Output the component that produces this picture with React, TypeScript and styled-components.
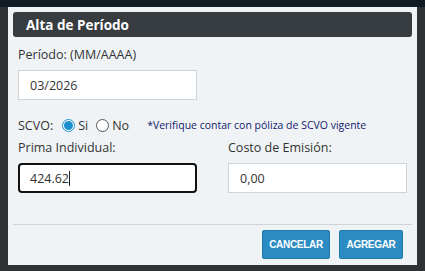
import React from "react";
import styled, { createGlobalStyle } from "styled-components";

const Global = createGlobalStyle`
  html, body { margin: 0; padding: 0; }
  body { background: #2e3133; font-family: "Open Sans", "Segoe UI", sans-serif; }
`;

const Page = styled.div`
  width: 425px;
  height: 271px;
  overflow: hidden;
  background: #2f3234;
  display: flex;
  flex-direction: column;
`;

const TopStrip = styled.div`
  height: 7px;
  background: #0f1c25;
  flex: none;
`;

const Stage = styled.div`
  flex: 1;
  display: flex;
  padding-left: 8px;
  align-items: flex-start;
`;

const Modal = styled.div`
  width: 409px;
  height: 258px;
  background: #eff3f6;
  display: flex;
  flex-direction: column;
  box-sizing: border-box;
  padding: 5px 5px 0;
`;

const Header = styled.div`
  height: 25px;
  background: #373c40;
  border-radius: 3px;
  color: #fff;
  font-weight: 700;
  font-size: 13.5px;
  display: flex;
  align-items: center;
  padding-left: 13px;
`;

const Body = styled.div`
  padding: 9px 5px 0;
  display: flex;
  flex-direction: column;
`;

const Label = styled.div`
  font-size: 12.5px;
  color: #333;
  height: 18px;
  line-height: 18px;
`;

const Input = styled.div<{ $focused?: boolean }>`
  width: 179px;
  height: 30px;
  box-sizing: border-box;
  background: #fff;
  border: ${(p) => (p.$focused ? "2px solid #111" : "1px solid #cfd3d6")};
  border-radius: ${(p) => (p.$focused ? "4px" : "0")};
  padding-left: ${(p) => (p.$focused ? "10px" : "11px")};
  font-size: 12.5px;
  color: #333;
  display: flex;
  align-items: center;
`;

const Caret = styled.span`
  display: inline-block;
  width: 1px;
  height: 15px;
  background: #222;
`;

const RadioRow = styled.div`
  display: flex;
  align-items: center;
  margin-top: 15px;
  height: 20px;
  font-size: 12.5px;
  color: #333;
`;

const RowLabel = styled.span`
  margin-right: 9px;
`;

const RadioCircle = styled.span<{ $checked?: boolean }>`
  width: 13px;
  height: 13px;
  box-sizing: border-box;
  border-radius: 50%;
  border: 1px solid ${(p) => (p.$checked ? "#1a8fd0" : "#555")};
  background: #fff;
  display: inline-flex;
  align-items: center;
  justify-content: center;
  margin-right: 3px;
  &::after {
    content: "";
    width: 9px;
    height: 9px;
    border-radius: 50%;
    background: ${(p) => (p.$checked ? "#1a8fd0" : "transparent")};
  }
`;

const RadioItem = styled.label`
  display: inline-flex;
  align-items: center;
  margin-right: 8px;
`;

const Note = styled.span`
  font-size: 10.5px;
  color: #12216b;
  margin-left: 10px;
`;

const FieldsRow = styled.div`
  display: flex;
  gap: 31px;
  margin-top: 4px;
`;

const Field = styled.div`
  display: flex;
  flex-direction: column;
  & > ${Label} { margin-bottom: 6px; }
`;

const PeriodLabel = styled(Label)`
  margin-bottom: 6px;
`;

const Divider = styled.div`
  height: 1px;
  background: #cfd3d6;
  margin: 31px 0 0;
`;

const Footer = styled.div`
  display: flex;
  justify-content: flex-end;
  gap: 9px;
  padding: 5px 9px 0 0;
`;

const Button = styled.button<{ $w: number }>`
  width: ${(p) => p.$w}px;
  height: 29px;
  padding: 0;
  background: #2b8cc4;
  border: 1px solid #2279ab;
  border-radius: 2px;
  color: #fff;
  font-family: "Liberation Sans", Arial, sans-serif;
  font-weight: 700;
  font-size: 10px;
  letter-spacing: -0.3px;
  cursor: pointer;
`;

export default function App() {
  return (
    <Page>
      <Global />
      <TopStrip />
      <Stage>
        <Modal>
          <Header>Alta de Período</Header>
          <Body>
            <PeriodLabel>Período: (MM/AAAA)</PeriodLabel>
            <Input>03/2026</Input>
            <RadioRow>
              <RowLabel>SCVO:</RowLabel>
              <RadioItem>
                <RadioCircle $checked />
                Si
              </RadioItem>
              <RadioItem>
                <RadioCircle />
                No
              </RadioItem>
              <Note>*Verifique contar con póliza de SCVO vigente</Note>
            </RadioRow>
            <FieldsRow>
              <Field>
                <Label>Prima Individual:</Label>
                <Input $focused>
                  424.62
                  <Caret />
                </Input>
              </Field>
              <Field>
                <Label>Costo de Emisión:</Label>
                <Input>0,00</Input>
              </Field>
            </FieldsRow>
          </Body>
          <Divider />
          <Footer>
            <Button $w={68}>CANCELAR</Button>
            <Button $w={64}>AGREGAR</Button>
          </Footer>
        </Modal>
      </Stage>
    </Page>
  );
}
